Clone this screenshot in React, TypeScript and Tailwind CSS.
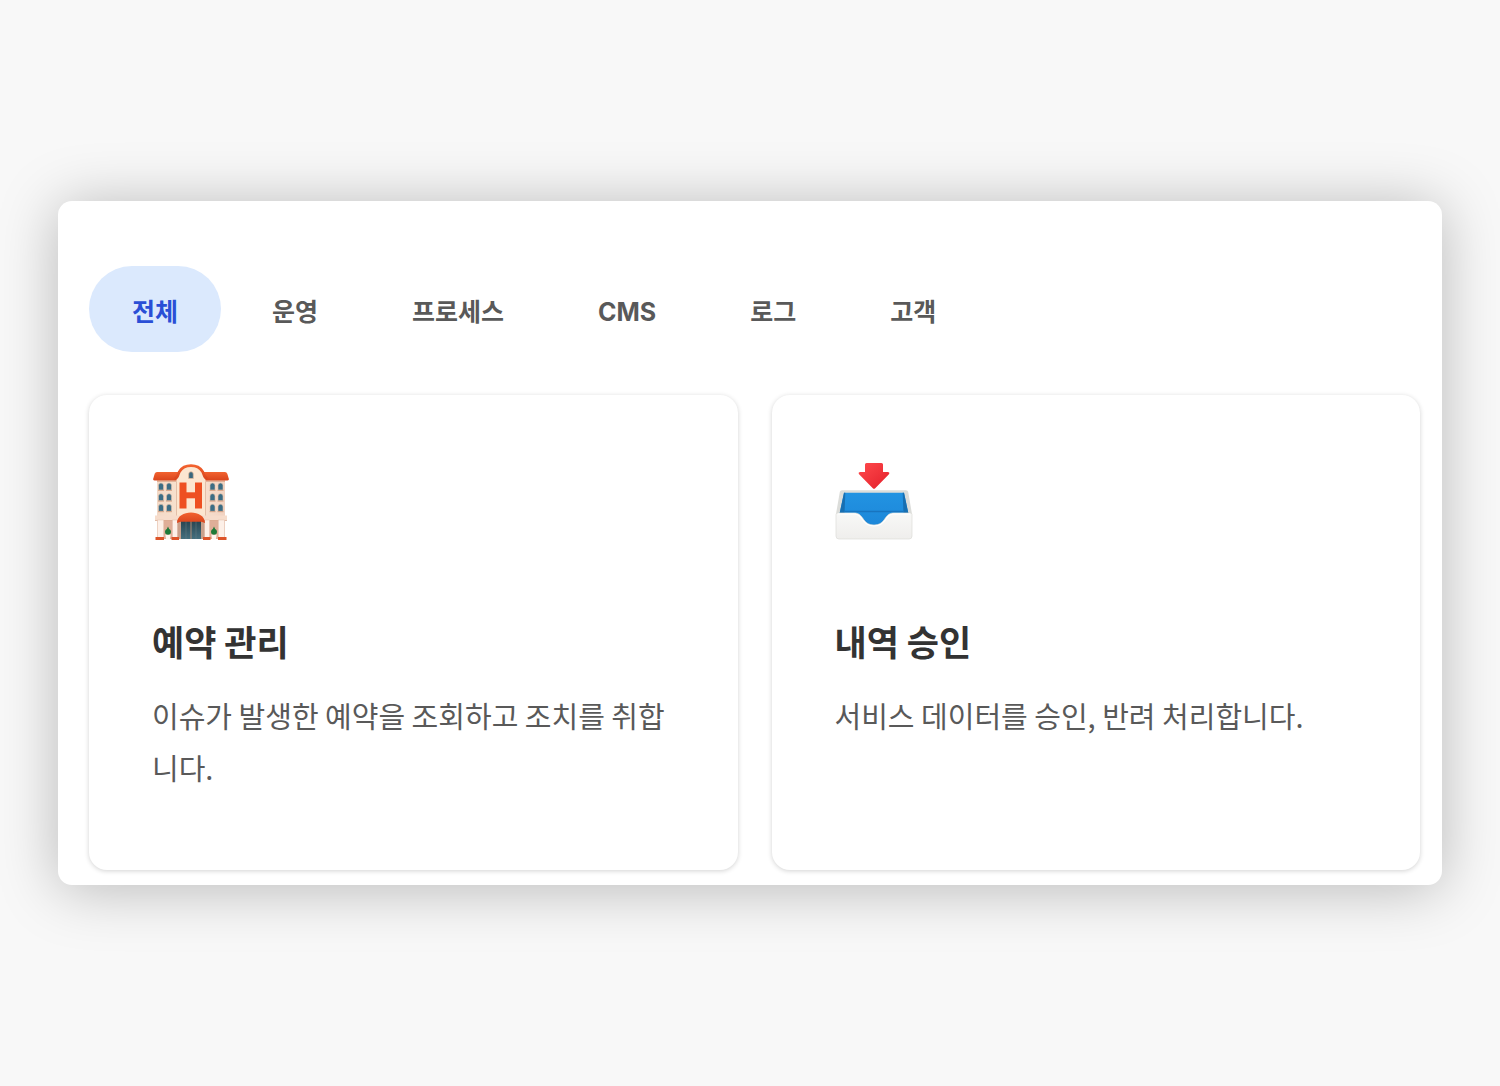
import { useState } from "react";

function HotelIcon() {
  return (
    <svg viewBox="0 0 78 78" className="size-[78px]" aria-hidden="true">
      <defs>
        <linearGradient id="wall" x1="0" x2="1" y1="0" y2="0">
          <stop offset="0" stopColor="#f3d9c6" />
          <stop offset=".5" stopColor="#fbe6d3" />
          <stop offset="1" stopColor="#f1d3c2" />
        </linearGradient>
        <linearGradient id="roof" x1="0" x2="0" y1="0" y2="1">
          <stop offset="0" stopColor="#f2622f" />
          <stop offset="1" stopColor="#d9441c" />
        </linearGradient>
        <linearGradient id="glass" x1="0" x2="0" y1="0" y2="1">
          <stop offset="0" stopColor="#27424e" />
          <stop offset="1" stopColor="#44707f" />
        </linearGradient>
      </defs>
      <rect x="5" y="14" width="68" height="62" fill="url(#wall)" />
      <path d="M5 9h23v8.500H2.500q-1.800 0-1.300-1.800l1.500-5Q3.300 9 5 9z" fill="url(#roof)" />
      <path d="M73 9H50v8.500h25.500q1.800 0 1.300-1.800l-1.500-5Q74.700 9 73 9z" fill="url(#roof)" />
      <path d="M5 17.500h68V19H5z" fill="#c9805f" opacity=".45" />
      <path d="M24.500 60V15C25.500 7 31 3 39 3s13.500 4 14.500 12v45z" fill="#fce6d0" />
      <path d="M24.500 18.500V54M53.500 18.500V54" stroke="#e3bfa8" strokeWidth="1" />
      <path
        d="M22.500 15.800C26.500 15 25.500 11.500 27.500 8.500 30 4.500 34 2.700 39 2.700s9 1.800 11.500 5.800c2 3 1 6.500 5 7.300"
        fill="none"
        stroke="url(#roof)"
        strokeWidth="2.800"
      />
      <path d="M36.700 15.500V11a2.300 2.300 0 0 1 4.600 0v4.500z" fill="#38677d" stroke="#ddb99c" strokeWidth=".8" />
      <g fill="#ee5022">
        <rect x="27.500" y="19.500" width="7" height="26" />
        <rect x="43" y="19.500" width="7" height="26" />
        <rect x="34" y="29.300" width="10" height="6" />
      </g>
      {[6.5, 14.5, 58, 66].map((x) =>
        [20, 30.7, 41.3].map((y) => (
          <g key={`${x}-${y}`}>
            <path d={`M${x} ${y + 7}v-4.500a2.500 2.500 0 0 1 5 0v4.500z`} fill="#3b6d85" stroke="#dcc0ab" strokeWidth=".6" />
            <path d={`M${x - 0.5} ${y + 7.400}h6`} stroke="#d39a7b" strokeWidth=".8" />
          </g>
        )),
      )}
      <path d="M11.500 57h9.500v19h-9.500zM57 57h9.500v19H57z" fill="#dfae98" />
      <path d="M3 52.500h72v4.800H3z" fill="#f6dccb" />
      <path d="M3 57h72v.8H3z" fill="#d8a78d" />
      <g fill="#fdf0e8" stroke="#e3c0ad" strokeWidth=".5">
        <rect x="5.500" y="57" width="6" height="19" />
        <rect x="20.500" y="57" width="5" height="19" />
        <rect x="52.500" y="57" width="5" height="19" />
        <rect x="66.500" y="57" width="6" height="19" />
      </g>
      <rect x="25.500" y="57" width="27" height="19" fill="#c9a08b" />
      <rect x="29" y="57" width="20" height="19" fill="url(#glass)" />
      <path d="M39 58v18" stroke="#b08d78" strokeWidth="1" />
      <path d="M34 58v18M44 58v18" stroke="#6d7d80" strokeWidth=".5" />
      <path d="M25 60c0-14 28-14 28 0l-3.500-1.200h-21z" fill="url(#roof)" />
      <g fill="#dd5429">
        <rect x="3.500" y="74" width="8.500" height="3" />
        <rect x="19.500" y="74" width="7.500" height="3" />
        <rect x="51" y="74" width="7.500" height="3" />
        <rect x="66" y="74" width="8.500" height="3" />
      </g>
      <path d="M13.300 71.500h5.400l-.9 5h-3.600zM59.300 71.500h5.400l-.9 5h-3.600z" fill="#fff5ef" />
      <g fill="#1e7a39">
        <ellipse cx="16" cy="68.800" rx="3" ry="2.900" />
        <ellipse cx="62" cy="68.800" rx="3" ry="2.900" />
        <path d="m16 63.500 1.800 4h-3.600zM62 63.500l1.800 4h-3.600z" />
      </g>
    </svg>
  );
}

function InboxIcon() {
  return (
    <svg viewBox="0 0 78 78" className="size-[78px]" aria-hidden="true">
      <defs>
        <linearGradient id="arrow" x1="0" x2="1" y1="0" y2="1">
          <stop offset="0" stopColor="#ff4a4c" />
          <stop offset="1" stopColor="#e31f2b" />
        </linearGradient>
        <linearGradient id="tray" x1="0" x2="0" y1="0" y2="1">
          <stop offset="0" stopColor="#2293e2" />
          <stop offset="1" stopColor="#1c86d8" />
        </linearGradient>
        <linearGradient id="front" x1="0" x2="0" y1="0" y2="1">
          <stop offset="0" stopColor="#f8f8f7" />
          <stop offset="1" stopColor="#efeeec" />
        </linearGradient>
      </defs>
      <path
        d="M31.500 0h15q1.500 0 1.500 1.500V9h4.500q3 .3 1.200 2.500L40.200 25.200q-1.200 1.100-2.400 0L24.300 11.500q-1.800-2.200 1.200-2.500H30V1.500Q30 0 31.500 0z"
        fill="url(#arrow)"
      />
      <path d="M7 27.300h64q1.800 0 2.200 1.800L77 51H1L4.800 29.100q.4-1.800 2.200-1.800z" fill="#dcddda" />
      <path d="M9 29.700h60L73.500 51v14h-69V51z" fill="url(#tray)" />
      <path d="M9 29.700 4.500 51h5l.8-21.300zM69 29.700 73.500 51h-5l-.8-21.300z" fill="#176fb2" />
      <path d="M9.500 47.800h59v1.400h-59z" fill="#1874bf" />
      <path
        d="M2.500 50h16.500c5 0 6.800 2.500 8.800 5.300C30.500 59.500 33.500 62 39 62s8.500-2.500 11.200-6.700C52.200 52.500 54 50 59 50h16.500q1.500 0 1.500 1.500V73q0 3-3 3H4q-3 0-3-3V51.500Q1 50 2.500 50z"
        fill="url(#front)"
        stroke="#dddcd9"
        strokeWidth=".7"
      />
      <path
        d="M3 51h16c4.500 0 6 2.200 8 5 2.700 4.300 6 7 12 7s9.300-2.700 12-7c2-2.800 3.500-5 8-5h16"
        fill="none"
        stroke="#fff"
        strokeWidth="1.200"
      />
    </svg>
  );
}

const tabs = ["전체", "운영", "프로세스", "CMS", "로그", "고객"];

const cards = [
  {
    icon: <HotelIcon />,
    title: "예약 관리",
    text: "이슈가 발생한 예약을 조회하고 조치를 취합니다.",
  },
  {
    icon: <InboxIcon />,
    title: "내역 승인",
    text: "서비스 데이터를 승인, 반려 처리합니다.",
  },
];

export default function App() {
  const [active, setActive] = useState("전체");

  return (
    <div className="flex min-h-screen items-center bg-[#f8f8f8] px-[58px] font-['Noto_Sans_CJK_KR',sans-serif]">
      <main className="w-full rounded-[14px] bg-white pt-[65px] pr-[22px] pb-[15px] pl-[31px] shadow-[0_4px_60px_rgba(0,0,0,0.26)]">
        <nav className="flex flex-wrap gap-2 font-[Inter,'Noto_Sans_CJK_KR',sans-serif]">
          {tabs.map((tab) => (
            <button
              key={tab}
              type="button"
              aria-pressed={active === tab}
              onClick={() => setActive(tab)}
              className={
                active === tab
                  ? "rounded-full bg-[#dbe9fd] px-[43px] pt-7 pb-[22px] text-[25px] leading-9 font-bold text-[#2a4fd6]"
                  : "rounded-full px-[43px] pt-7 pb-[22px] text-[25px] leading-9 font-bold text-[#595959]"
              }
            >
              {tab}
            </button>
          ))}
        </nav>
        <div className="mt-[43px] grid grid-cols-2 gap-[34px]">
          {cards.map((card) => (
            <section
              key={card.title}
              className="rounded-[18px] bg-white px-[63px] pt-[68px] pb-[77px] shadow-[0_1px_5px_rgba(0,0,0,0.18)]"
            >
              {card.icon}
              <h2 className="mt-[76px] text-[35px] leading-[48px] font-bold text-[#333]">{card.title}</h2>
              <p className="mt-6 text-[29px] leading-[52px] text-[#595959]">{card.text}</p>
            </section>
          ))}
        </div>
      </main>
    </div>
  );
}
